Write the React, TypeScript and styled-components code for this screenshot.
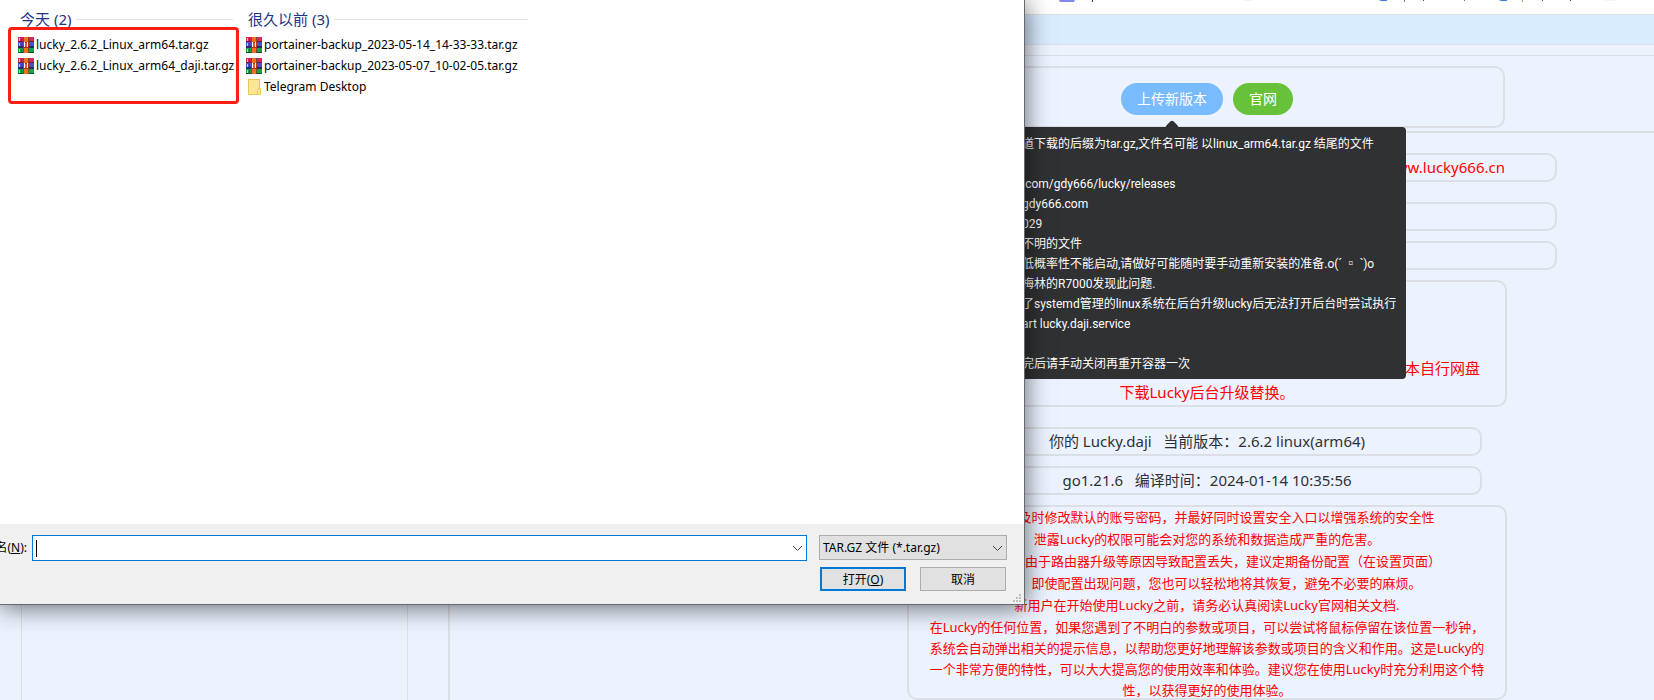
import React from "react";
import styled, { createGlobalStyle } from "styled-components";

const GlobalStyle = createGlobalStyle`
  * { box-sizing: border-box; }
  body {
    margin: 0;
    font-family: "Noto Sans", "Noto Sans CJK SC", sans-serif;
    background: #ecf3ff;
  }
  p, h2, ul { margin: 0; padding: 0; font-weight: 400; }
  button, input, select { font: inherit; margin: 0; }
`;

const line = "#dcdfe6";

const Page = styled.div`
  position: relative;
  display: flex;
  flex-direction: column;
  height: 100vh;
  overflow: hidden;
`;

const BookmarkStrip = styled.div`
  flex: none;
  height: 14px;
  padding-left: 1059px;
  overflow: hidden;
  background: #fff;
  svg { display: block; }
`;

const HeaderBar = styled.header`
  flex: none;
  height: 31px;
  background: #d9ebff;
  border-top: 1px solid #dedfe0;
  border-bottom: 1px solid ${line};
`;

const Shell = styled.div`
  flex: 1;
  display: flex;
  gap: 40px;
  margin-top: 10px;
  padding-left: 21px;
  border-top: 1px solid ${line};
`;

const Sidebar = styled.aside`
  flex: none;
  width: 387px;
  border: solid ${line};
  border-width: 0 1px;
`;

/* The console is wider than the window and runs off its right edge. */
const Main = styled.main`
  flex: 1;
  display: flex;
  flex-direction: column;
  gap: 3px;
  margin-right: -312px;
  padding-top: 10px;
`;

const Outlined = styled.div`
  border: 2px solid ${line};
  border-radius: 10px;
`;

const ActionCard = styled(Outlined)`
  display: flex;
  align-items: flex-start;
  justify-content: center;
  gap: 10px;
  align-self: center;
  width: 596px;
  height: 62px;
  padding-top: 15px;
`;

const Anchor = styled.div`
  position: relative;
`;

const RoundButton = styled.button<{ $color: string }>`
  display: block;
  height: 32px;
  padding: 0 16px;
  border: 0;
  border-radius: 16px;
  background: ${(p) => p.$color};
  color: #fff;
  font-size: 14px;
  line-height: 32px;
  white-space: nowrap;
`;

const Tooltip = styled.div`
  position: absolute;
  z-index: 2;
  top: calc(100% + 12px);
  left: 50%;
  width: 468px;
  padding: 7px 12px 5px 84px;
  transform: translateX(-50%);
  border-radius: 4px;
  background: #303133;
  color: #fff;
  font-family: Roboto, "Noto Sans", "Noto Sans CJK SC", sans-serif;
  font-size: 12px;
  line-height: 20px;
  white-space: nowrap;
  &::before {
    content: "";
    position: absolute;
    top: -5px;
    left: 50%;
    width: 10px;
    height: 10px;
    margin-left: -5px;
    border-radius: 2px;
    background: #303133;
    transform: rotate(45deg);
  }
`;

const TipLine = styled.p`
  height: 20px;
`;

const Panel = styled.section`
  flex: 1;
  display: flex;
  flex-direction: column;
  align-items: center;
  gap: 20px;
  padding: 20px 2px 0 0;
  border: solid ${line};
  border-width: 2px 0 0 2px;
`;

const Stack = styled.div`
  display: flex;
  flex-direction: column;
  align-items: center;
  gap: 10px;
`;

const Pill = styled(Outlined)<{ $wide?: boolean; $end?: boolean }>`
  display: flex;
  justify-content: ${(p) => (p.$end ? "flex-end" : "center")};
  width: ${(p) => (p.$wide ? 700 : 550)}px;
  height: 29px;
  padding: 0 50px;
  color: ${(p) => (p.$end ? "#ff0000" : "#303133")};
  font-size: 15px;
  line-height: 25px;
  white-space: pre;
`;

const NoticeCard = styled(Outlined)`
  display: flex;
  flex-direction: column;
  justify-content: flex-end;
  width: 600px;
  height: 127px;
  padding: 0 25px 1px;
  color: #ff0000;
  font-size: 15px;
  line-height: 24px;
  text-align: center;
`;

const NoticeTail = styled.p`
  text-align: right;
`;

const TipsCard = styled(Outlined)`
  display: flex;
  flex-direction: column;
  gap: 1px;
  width: 600px;
  height: 195px;
  padding: 0 20px;
  color: #ff0000;
  font-size: 13px;
  line-height: 21px;
  text-align: center;
  white-space: nowrap;
`;

const Dialog = styled.div`
  position: absolute;
  z-index: 5;
  top: 0;
  left: 0;
  display: flex;
  flex-direction: column;
  width: calc(100% - 629px);
  border: solid #66696d;
  border-width: 0 1px 1px 0;
  background: #fff;
  box-shadow: 0 2px 24px rgba(0, 0, 0, 0.6);
  color: #000;
  font-size: 12px;
`;

const FileArea = styled.div`
  display: flex;
  align-items: flex-start;
  gap: 13px;
  height: 524px;
  padding: 9px 0 0 18px;
`;

const FileGroup = styled.section<{ $width: number }>`
  flex: none;
  width: ${(p) => p.$width}px;
`;

const GroupTitle = styled.h2`
  display: flex;
  align-items: center;
  gap: 5px;
  height: 20px;
  margin-bottom: 5px;
  padding-left: 2px;
  color: #1e3287;
  font-size: 15px;
  line-height: 20px;
  white-space: nowrap;
  &::after {
    content: "";
    flex: 1;
    height: 1px;
    background: #e2e2e2;
  }
`;

const FileRow = styled.li`
  display: flex;
  align-items: center;
  gap: 2px;
  height: 21px;
  list-style: none;
  line-height: 21px;
  white-space: nowrap;
  svg { flex: none; }
`;

const Highlight = styled.div`
  position: absolute;
  top: 27px;
  left: 8px;
  width: 231px;
  height: 77px;
  border: 3px solid #ff1e14;
  border-radius: 4px;
`;

const DialogFooter = styled.form`
  position: relative;
  display: flex;
  flex-direction: column;
  gap: 6px;
  height: 80px;
  padding: 11px 17px 0 0;
  background: #f0f0f0;
`;

const FooterRow = styled.div`
  display: flex;
  justify-content: flex-end;
`;

const NameLabel = styled.label`
  display: flex;
  flex: none;
  justify-content: flex-end;
  width: 27px;
  margin-right: 5px;
  line-height: 26px;
  white-space: nowrap;
`;

const Combo = styled.div`
  position: relative;
  flex: 1;
  height: 26px;
  margin-right: 12px;
`;

const NameInput = styled.input`
  display: block;
  width: 100%;
  height: 26px;
  padding: 0 24px 0 4px;
  border: 1px solid #0078d7;
  border-radius: 0;
  outline: 0;
  background: #fff;
`;

const Caret = styled.span`
  position: absolute;
  top: 5px;
  left: 4px;
  width: 1px;
  height: 17px;
  background: #000;
`;

const Chevron = styled.svg`
  position: absolute;
  top: 10px;
  right: 4px;
  pointer-events: none;
`;

const FilterBox = styled.div`
  position: relative;
  flex: none;
  width: 188px;
`;

const FilterSelect = styled.select`
  display: block;
  width: 100%;
  height: 25px;
  padding: 0 24px 0 3px;
  appearance: none;
  border: 1px solid #adadad;
  border-radius: 0;
  background: #e1e1e1;
  color: #000;
`;

const DialogButton = styled.button<{ $primary?: boolean }>`
  width: 86px;
  height: 24px;
  margin: 0 1px 0 13px;
  padding: 0;
  border: ${(p) => (p.$primary ? "2px solid #0078d7" : "1px solid #adadad")};
  background: #e1e1e1;
  color: #000;
`;

const Grip = styled.svg`
  position: absolute;
  right: 3px;
  bottom: 2px;
`;

const ArchiveIcon = () => (
  <svg width="16" height="16" viewBox="0 0 16 16" aria-hidden="true">
    <rect width="16" height="5" fill="#d32a5c" />
    <rect y="4" width="16" height="1" fill="#7d1238" />
    <rect y="5" width="16" height="6" fill="#4a50c8" />
    <rect y="9" width="16" height="2" fill="#25286e" />
    <rect y="11" width="16" height="5" fill="#17a050" />
    <rect y="15" width="16" height="1" fill="#0b5428" />
    <path d="M1.5 1v3M1.5 6v3M1.5 12v3" stroke="#f0d040" />
    <path d="M3.5 1v3M3.5 6v3M3.5 12v3" stroke="#25284a" opacity=".5" />
    <rect x="5" width="6" height="16" fill="#7a4a20" />
    <rect x="6" width="4" height="16" fill="#f07020" />
    <rect x="5" y="5" width="6" height="6" fill="#a8341c" />
    <path d="M6.500 5v5M9.500 5v5" fill="none" stroke="#fff" />
    <rect x="7" y="6" width="2" height="4" fill="#f05030" />
  </svg>
);

const FolderIcon = () => (
  <svg width="16" height="16" viewBox="0 0 16 16" aria-hidden="true">
    <rect x="2.5" y=".5" width="11" height="15" fill="#ffe694" stroke="#ecc850" />
    <path d="M12.5 9.500h2v6h-3v-4z" fill="#ffe694" stroke="#ecc850" />
  </svg>
);

const ChevronDown = () => (
  <Chevron width="11" height="7" viewBox="0 0 11 7" aria-hidden="true">
    <path d="M1 1l4.500 4.500L10 1" fill="none" stroke="#444" />
  </Chevron>
);

const files = [
  {
    title: "今天 (2)",
    width: 215,
    items: ["lucky_2.6.2_Linux_arm64.tar.gz", "lucky_2.6.2_Linux_arm64_daji.tar.gz"],
  },
  {
    title: "很久以前 (3)",
    width: 282,
    items: [
      "portainer-backup_2023-05-14_14-33-33.tar.gz",
      "portainer-backup_2023-05-07_10-02-05.tar.gz",
      "Telegram Desktop",
    ],
  },
];

const tipLines = [
  "道下载的后缀为tar.gz,文件名可能 以linux_arm64.tar.gz 结尾的文件",
  "",
  ".com/gdy666/lucky/releases",
  "gdy666.com",
  "029",
  "不明的文件",
  "低概率性不能启动,请做好可能随时要手动重新安装的准备.o(ˊ ▫ ˋ)o",
  "梅林的R7000发现此问题.",
  "了systemd管理的linux系统在后台升级lucky后无法打开后台时尝试执行",
  "art lucky.daji.service",
  "",
  "完后请手动关闭再重开容器一次",
];

const adviceLines = [
  "请务必及时修改默认的账号密码，并最好同时设置安全入口以增强系统的安全性",
  "泄露Lucky的权限可能会对您的系统和数据造成严重的危害。",
  "为了防止由于路由器升级等原因导致配置丢失，建议定期备份配置（在设置页面）",
  "这样，即使配置出现问题，您也可以轻松地将其恢复，避免不必要的麻烦。",
  "新用户在开始使用Lucky之前，请务必认真阅读Lucky官网相关文档.",
];

export default function App() {
  return (
    <Page>
      <GlobalStyle />
      <BookmarkStrip>
        <svg width="560" height="2" viewBox="0 0 560 2" aria-hidden="true">
          <path d="M0 0h16l-1 2H1z" fill="#8088f0" />
          <path d="M33 0h1v2h-1z" fill="#503070" />
          <path d="M183 0h11l-3 1h-5z" fill="#f2f2f2" />
          <path d="M320 0h9l-2 1h-5z" fill="#3a78d8" />
          <path d="M345 0h1v2h-1zM405 0h1v1h-1z" fill="#6080a0" />
          <path d="M364 0h1v1h-1zM483 0h1v1h-1zM511 0h1v1h-1z" fill="#604040" />
          <path d="M440 0h9l-2 1h-5z" fill="#3a78d8" />
          <path d="M463 0h1v2h-1z" fill="#c09050" />
          <path d="M545 0h12l-3 1h-6z" fill="#f4f4f4" />
        </svg>
      </BookmarkStrip>
      <HeaderBar />
      <Shell>
        <Sidebar />
        <Main>
          <ActionCard>
            <Anchor>
              <RoundButton $color="#79bbff" type="button" aria-describedby="upload-tip">
                上传新版本
              </RoundButton>
              <Tooltip id="upload-tip" role="tooltip">
                {tipLines.map((text, i) => (
                  <TipLine key={i}>{text}</TipLine>
                ))}
              </Tooltip>
            </Anchor>
            <RoundButton $color="#67c23a" type="button">
              官网
            </RoundButton>
          </ActionCard>
          <Panel>
            <Pill $wide $end>www.lucky666.cn</Pill>
            <Stack>
              <Pill $wide />
              <Pill $wide />
              <NoticeCard>
                <NoticeTail>本自行网盘</NoticeTail>
                <p>下载Lucky后台升级替换。</p>
              </NoticeCard>
            </Stack>
            <Stack>
              <Pill>{"你的 Lucky.daji   当前版本：2.6.2 linux(arm64)"}</Pill>
              <Pill>{"go1.21.6   编译时间：2024-01-14 10:35:56"}</Pill>
              <TipsCard>
                {adviceLines.map((text) => (
                  <p key={text}>{text}</p>
                ))}
                <p>
                  在Lucky的任何位置，如果您遇到了不明白的参数或项目，可以尝试将鼠标停留在该位置一秒钟，
                  <br />
                  系统会自动弹出相关的提示信息，以帮助您更好地理解该参数或项目的含义和作用。这是Lucky的
                  <br />
                  一个非常方便的特性，可以大大提高您的使用效率和体验。建议您在使用Lucky时充分利用这个特
                  <br />
                  性，以获得更好的使用体验。
                </p>
              </TipsCard>
            </Stack>
          </Panel>
        </Main>
      </Shell>

      <Dialog role="dialog" aria-label="打开">
        <FileArea>
          {files.map((group) => (
            <FileGroup key={group.title} $width={group.width}>
              <GroupTitle>{group.title}</GroupTitle>
              <ul>
                {group.items.map((name) => (
                  <FileRow key={name}>
                    {name.endsWith(".gz") ? <ArchiveIcon /> : <FolderIcon />}
                    {name}
                  </FileRow>
                ))}
              </ul>
            </FileGroup>
          ))}
        </FileArea>
        <Highlight />
        <DialogFooter>
          <FooterRow>
            <NameLabel htmlFor="file-name">
              名(<u>N</u>):
            </NameLabel>
            <Combo>
              <NameInput id="file-name" type="text" />
              <Caret />
              <ChevronDown />
            </Combo>
            <FilterBox>
              <FilterSelect aria-label="文件类型">
                <option>TAR.GZ 文件 (*.tar.gz)</option>
              </FilterSelect>
              <ChevronDown />
            </FilterBox>
          </FooterRow>
          <FooterRow>
            <DialogButton $primary type="button">
              打开(<u>O</u>)
            </DialogButton>
            <DialogButton type="button">取消</DialogButton>
          </FooterRow>
          <Grip width="8" height="8" viewBox="0 0 8 8" aria-hidden="true">
            <path
              d="M6 0h2v2H6zM3 3h2v2H3zM6 3h2v2H6zM0 6h2v2H0zM3 6h2v2H3zM6 6h2v2H6z"
              fill="#bfbfbf"
            />
          </Grip>
        </DialogFooter>
      </Dialog>
    </Page>
  );
}
